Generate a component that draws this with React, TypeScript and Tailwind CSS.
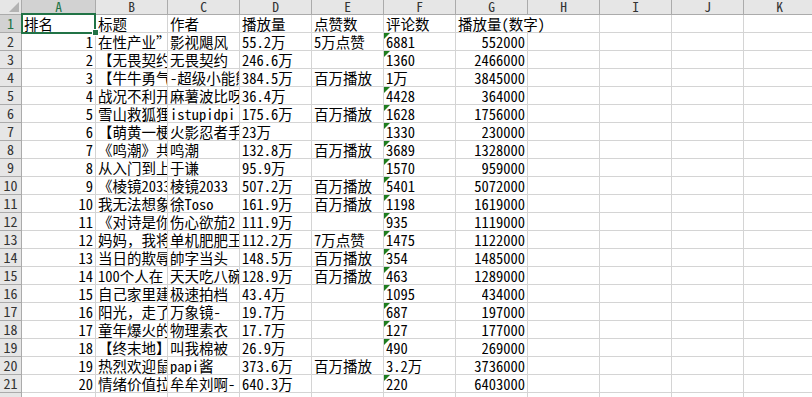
import React from "react";

type Row = {
  a: string;
  b: string;
  c: string;
  d: string;
  e: string;
  f: string;
  fTri: boolean;
  g: string;
};

const rows: Row[] = [
  { a: "1", b: "在性产业”里挣扎的人们", c: "影视飓风", d: "55.2万", e: "5万点赞", f: "6881", fTri: true, g: "552000" },
  { a: "2", b: "【无畏契约】新英雄", c: "无畏契约", d: "246.6万", e: "", f: "1360", fTri: true, g: "2466000" },
  { a: "3", b: "【牛牛勇气大冒险】", c: "-超级小能熊-", d: "384.5万", e: "百万播放", f: "1万", fTri: false, g: "3845000" },
  { a: "4", b: "战况不利开局", c: "麻薯波比呀", d: "36.4万", e: "", f: "4428", fTri: true, g: "364000" },
  { a: "5", b: "雪山救狐狸记", c: "istupidpi", d: "175.6万", e: "百万播放", f: "1628", fTri: true, g: "1756000" },
  { a: "6", b: "【萌黄一梗】", c: "火影忍者手游", d: "23万", e: "", f: "1330", fTri: true, g: "230000" },
  { a: "7", b: "《鸣潮》共鸣者", c: "鸣潮", d: "132.8万", e: "百万播放", f: "3689", fTri: true, g: "1328000" },
  { a: "8", b: "从入门到上瘾", c: "于谦", d: "95.9万", e: "", f: "1570", fTri: true, g: "959000" },
  { a: "9", b: "《棱镜2033》", c: "棱镜2033", d: "507.2万", e: "百万播放", f: "5401", fTri: true, g: "5072000" },
  { a: "10", b: "我无法想象的", c: "徐Toso", d: "161.9万", e: "百万播放", f: "1198", fTri: true, g: "1619000" },
  { a: "11", b: "《对诗是你的", c: "伤心欲茄2", d: "111.9万", e: "", f: "935", fTri: true, g: "1119000" },
  { a: "12", b: "妈妈，我将要", c: "单机肥肥王", d: "112.2万", e: "7万点赞", f: "1475", fTri: true, g: "1122000" },
  { a: "13", b: "当日的欺辱", c: "帥字当头", d: "148.5万", e: "百万播放", f: "354", fTri: true, g: "1485000" },
  { a: "14", b: "100个人在", c: "天天吃八碗", d: "128.9万", e: "百万播放", f: "463", fTri: true, g: "1289000" },
  { a: "15", b: "自己家里建的", c: "极速拍档", d: "43.4万", e: "", f: "1095", fTri: true, g: "434000" },
  { a: "16", b: "阳光，走了", c: "万象镜-", d: "19.7万", e: "", f: "687", fTri: true, g: "197000" },
  { a: "17", b: "童年爆火的", c: "物理素衣", d: "17.7万", e: "", f: "127", fTri: true, g: "177000" },
  { a: "18", b: "【终末地】", c: "叫我棉被", d: "26.9万", e: "", f: "490", fTri: true, g: "269000" },
  { a: "19", b: "热烈欢迎鼠鼠", c: "papi酱", d: "373.6万", e: "百万播放", f: "3.2万", fTri: false, g: "3736000" },
  { a: "20", b: "情绪价值拉满", c: "牟牟刘啊-", d: "640.3万", e: "", f: "220", fTri: true, g: "6403000" },
];

const colLetters = ["A", "B", "C", "D", "E", "F", "G", "H", "I", "J", "K"];

const FONT = "[font-family:'Noto_Sans_Mono_CJK_SC','Noto_Sans_CJK_SC',monospace]";

function Cell({
  children,
  align = "left",
  tri = false,
  clip = true,
  noRight = false,
}: {
  children?: React.ReactNode;
  align?: "left" | "right";
  tri?: boolean;
  clip?: boolean;
  noRight?: boolean;
}) {
  return (
    <div
      className={
        "relative flex h-full items-end bg-white border-b border-[#d4d4d4] " +
        (noRight ? "" : "border-r ") +
        (clip ? "overflow-hidden " : "overflow-visible z-10 ") +
        (align === "right" ? "justify-end pr-[2px]" : "justify-start pl-[2px]")
      }
    >
      {tri && (
        <div className="absolute left-0 top-0 h-0 w-0 border-t-[6px] border-r-[6px] border-t-[#1e7d1e] border-r-transparent" />
      )}
      <span
        className={
          "whitespace-nowrap leading-[17px] text-[14.5px] text-black " +
          (clip ? "block max-w-full overflow-hidden" : "")
        }
      >
        {children}
      </span>
    </div>
  );
}

function ColHeader({ letter, selected }: { letter: string; selected?: boolean }) {
  return (
    <div
      className={
        "flex h-full items-center justify-center overflow-hidden border-r border-b text-[13.5px] leading-none " +
        (selected
          ? "bg-[#d2d2d2] border-r-[#ababab] border-b-[#217346] text-[#217346]"
          : "bg-[#e6e6e6] border-r-[#ababab] border-b-[#ababab] text-[#333]")
      }
    >
      {letter}
    </div>
  );
}

function RowHeader({ n, selected }: { n: number; selected?: boolean }) {
  return (
    <div
      className={
        "flex h-full items-end justify-center overflow-hidden border-r border-b text-[14px] leading-[17px] " +
        (selected
          ? "bg-[#d2d2d2] border-r-[#217346] border-b-[#ababab] text-[#217346]"
          : "bg-[#e6e6e6] border-r-[#ababab] border-b-[#ababab] text-[#333]")
      }
    >
      {n}
    </div>
  );
}

export default function App() {
  const emptyTail = (key: string) =>
    ["H", "I", "J", "K"].map((c) => <Cell key={key + c} />);

  return (
    <div className={"h-[397px] w-[812px] overflow-hidden bg-white " + FONT}>
      <div className="grid grid-cols-[22px_74px_repeat(10,72px)] grid-rows-[15px_repeat(22,18px)]">
        {/* corner */}
        <div className="relative border-r border-b border-[#ababab] bg-[#e6e6e6]">
          <svg className="absolute bottom-[2px] right-[2px]" width="10" height="10" viewBox="0 0 10 10">
            <polygon points="10,0 10,10 0,10" fill="#b3b3b3" />
          </svg>
        </div>
        {colLetters.map((l) => (
          <ColHeader key={l} letter={l} selected={l === "A"} />
        ))}

        {/* row 1 */}
        <RowHeader n={1} selected />
        <div className="relative h-full">
          <Cell>排名</Cell>
          <div className="pointer-events-none absolute left-[-1px] top-[-2px] z-20 h-[21px] w-[75px] border-2 border-[#217346]" />
          <div className="absolute right-[-3px] bottom-[-3px] z-30 h-[7px] w-[7px] border border-white bg-[#217346]" />
        </div>
        <Cell>标题</Cell>
        <Cell>作者</Cell>
        <Cell>播放量</Cell>
        <Cell>点赞数</Cell>
        <Cell>评论数</Cell>
        <Cell clip={false} noRight>
          播放量(数字)
        </Cell>
        {emptyTail("r1")}

        {rows.map((r, i) => (
          <React.Fragment key={i}>
            <RowHeader n={i + 2} />
            <Cell align="right">{r.a}</Cell>
            <Cell>{r.b}</Cell>
            <Cell>{r.c}</Cell>
            <Cell>{r.d}</Cell>
            <Cell>{r.e}</Cell>
            <Cell tri={r.fTri}>{r.f}</Cell>
            <Cell align="right">{r.g}</Cell>
            {emptyTail("r" + i)}
          </React.Fragment>
        ))}

        {/* row 22 partial */}
        <RowHeader n={22} />
        {colLetters.map((l) => (
          <Cell key={"r22" + l} />
        ))}
      </div>
    </div>
  );
}
